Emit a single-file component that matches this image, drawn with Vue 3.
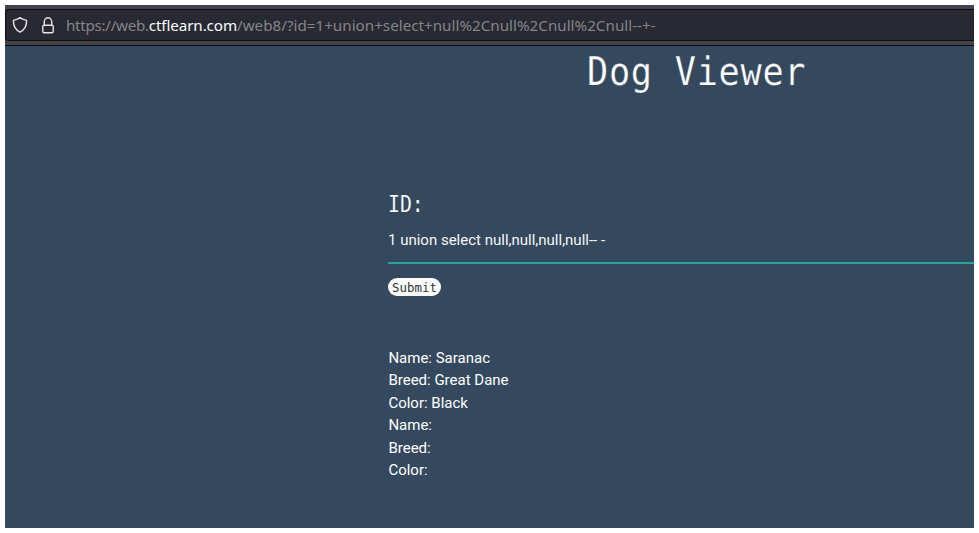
<script setup>
const records = [
  { name: 'Saranac', breed: 'Great Dane', color: 'Black' },
  { name: '', breed: '', color: '' },
]
const query = '1 union select null,null,null,null-- -'
</script>

<template>
  <div class="window">
    <header class="toolbar">
      <div class="address">
        <svg class="shield" viewBox="0 0 16 18" fill="none" stroke="#e4e4e8" stroke-width="1.4" stroke-linejoin="round">
          <path d="M8 1.6C6.2 3.1 4 3.7 2.1 4.1Q1.4 4.3 1.4 5.1C1.4 10.2 3.6 14.1 8 16.2C12.4 14.1 14.6 10.2 14.6 5.1Q14.6 4.3 13.9 4.1C12 3.7 9.8 3.1 8 1.6Z" />
        </svg>
        <svg class="lock" viewBox="0 0 12 17" fill="none" stroke="#e4e4e8" stroke-width="1.4">
          <path d="M2.3 8V4.5a3.7 3.7 0 0 1 7.4 0V8" />
          <rect x="0.8" y="8.2" width="10.4" height="7.6" rx="1.4" />
        </svg>
        <span class="url"><span class="scheme">https://web.</span><b>ctflearn.com</b><span class="path">/web8/?id=1+union+select+null%2Cnull%2Cnull%2Cnull--+-</span></span>
      </div>
    </header>
    <main class="page">
      <h1><span>Dog Viewer</span></h1>
      <form class="lookup" @submit.prevent>
        <label for="dog-id"><span>ID:</span></label>
        <input id="dog-id" type="text" :value="query" />
        <button type="submit"><span>Submit</span></button>
      </form>
      <section class="results">
        <template v-for="(dog, i) in records" :key="i">
          <div>Name: {{ dog.name }}</div>
          <div>Breed: {{ dog.breed }}</div>
          <div>Color: {{ dog.color }}</div>
        </template>
      </section>
    </main>
  </div>
</template>

<style>
body {
  margin: 0;
  background: #fff;
  overflow: hidden;
}
</style>

<style scoped>
.window {
  box-sizing: border-box;
  width: 969px;
  height: 523px;
  margin: 5px;
  overflow: hidden;
  background: #34495e;
  font-family: Roboto, sans-serif;
}
.toolbar {
  box-sizing: border-box;
  height: 41px;
  padding-top: 4px;
  background: #42434b;
  border-bottom: 1px solid #0c0c0d;
}
.address {
  box-sizing: border-box;
  display: flex;
  align-items: center;
  height: 32px;
  padding-left: 6px;
  background: #282932;
  border: solid #0c0c11;
  border-width: 1px 0 1px 1px;
  border-radius: 4px 0 0 4px;
}
.shield {
  flex: none;
  width: 16px;
  height: 18px;
}
.lock {
  flex: none;
  width: 12px;
  height: 17px;
  margin-left: 14px;
}
.url {
  margin-left: 12px;
  color: #85858b;
  font: 15.2px/30px "Noto Sans", sans-serif;
  white-space: pre;
}
.url b {
  color: #fbfbfe;
  font-weight: 400;
  letter-spacing: -0.1px;
}
.scheme {
  letter-spacing: -0.29px;
}
.path {
  letter-spacing: 0.01px;
}
.page {
  color: #fff;
}
h1,
label,
button {
  font-family: "DejaVu Sans Mono", monospace;
  font-weight: 400;
}
h1 {
  width: 224px;
  height: 48px;
  margin: 0 0 0 582px;
  font-size: 38.4px;
  line-height: 51px;
  white-space: nowrap;
}
h1 span,
label span,
button span {
  display: inline-block;
  transform-origin: left center;
}
h1 span {
  letter-spacing: 0.8px;
  transform: scaleX(0.917);
  -webkit-text-stroke: 0.25px #34495e;
}
.lookup {
  display: flex;
  flex-direction: column;
  align-items: flex-start;
  margin: 98px 0 0 383px;
}
label {
  height: 25px;
  font-size: 22.5px;
  line-height: 24px;
}
label span {
  transform: scaleX(0.88);
  -webkit-text-stroke: 0.15px #34495e;
}
input {
  box-sizing: border-box;
  width: 586px;
  height: 47px;
  padding: 0;
  color: #f4f6f7;
  background: transparent;
  border: 0;
  border-bottom: 2px solid #26a69a;
  border-radius: 0;
  outline: 0;
  font: 15px Roboto, sans-serif;
}
button {
  width: 53px;
  height: 18px;
  margin-top: 14px;
  padding: 1px 0 0 4px;
  overflow: hidden;
  color: #333;
  background: #fff;
  border: 0;
  border-radius: 9px;
  font-size: 13px;
  line-height: 18px;
  text-align: left;
}
button span {
  transform: scaleX(0.957);
}
.results {
  margin: 50.6px 0 0 383.4px;
  font-size: 15px;
  line-height: 22.5px;
}
</style>
